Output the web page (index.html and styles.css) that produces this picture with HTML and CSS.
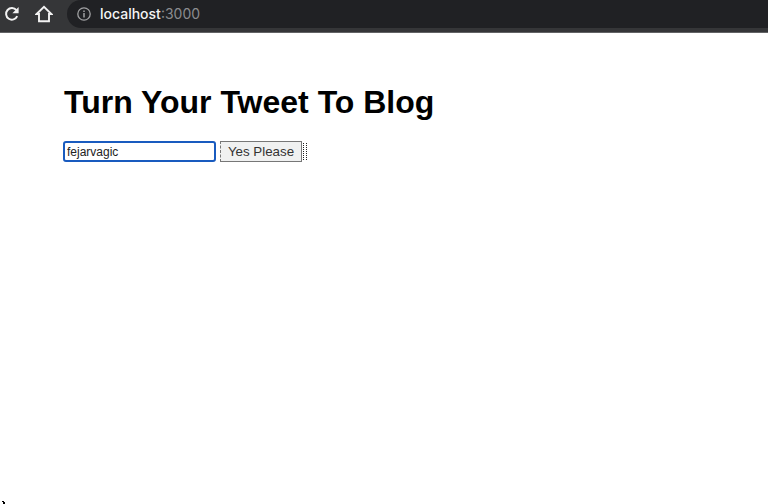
FILE: index.html
```
<!DOCTYPE html>
<html lang="en">
<head>
<meta charset="utf-8">
<title>Turn Your Tweet To Blog</title>
<link rel="stylesheet" href="styles.css">
</head>
<body>
<header class="toolbar">
  <svg class="icon reload" viewBox="0 0 16 16"><path d="M13.2 10.2A5.8 5.8 0 1 1 12.4 4.2" fill="none" stroke="#f2f2f2" stroke-width="2"/><path d="M14.6 1v6.2H8.4z" fill="#f2f2f2"/></svg>
  <svg class="icon home" viewBox="0 0 18 18"><path d="M1.6 9 9 1.8 16.4 9H14v7.2H4V9z" fill="none" stroke="#f2f2f2" stroke-width="1.9"/></svg>
  <div class="address">
    <svg class="info" viewBox="0 0 14 14"><circle cx="7" cy="7" r="6.2" fill="none" stroke="#a0a1a3" stroke-width="1.3"/><path d="M7 6v4.5M7 3.4v1.5" stroke="#a0a1a3" stroke-width="1.5"/></svg>
    <span class="url">localhost<span class="port">:3000</span></span>
  </div>
</header>
<main class="page">
  <h1 class="title">Turn Your Tweet To Blog</h1>
  <form class="form">
    <input class="field" type="text" value="fejarvagic" aria-label="Tweet">
    <button class="submit" type="button">Yes Please</button>
    <span class="edge"></span>
  </form>
</main>
<svg class="corner" viewBox="0 0 6 3"><path d="M2 0h2v1h1v2H3V1H2z" fill="#000"/></svg>
</body>
</html>
```
FILE: styles.css
```
* { box-sizing: border-box; }
body {
  position: relative;
  margin: 0;
  height: 504px;
  overflow: hidden;
  background: #fff;
  color: #000;
  font-family: "Liberation Sans", Arial, sans-serif;
}
.toolbar {
  display: flex;
  height: 33px;
  padding-left: 4px;
  background: #353638;
  border-bottom: 1px solid #626365;
}
.icon { flex: none; }
.reload { width: 16px; height: 16px; margin-top: 6px; }
.home { width: 18px; height: 18px; margin: 5px 0 0 15px; }
.address {
  display: flex;
  flex: 1;
  height: 28px;
  margin-left: 14px;
  padding-left: 10px;
  background: #202124;
  border-radius: 14px 0 0 14px;
}
.info { flex: none; width: 14px; height: 14px; margin-top: 7px; }
.url {
  margin-left: 9px;
  font: 500 14px/28px Inter, sans-serif;
  color: #f4f4f4;
}
.port { color: #8b8c8f; font-weight: 400; }
.page { padding: 51px 64px 0; }
.title {
  margin: 0;
  font-size: 32px;
  line-height: 37px;
  font-weight: 700;
  white-space: nowrap;
}
.form { display: flex; align-items: center; margin-top: 20px; height: 21px; }
.field {
  width: 153px;
  height: 21px;
  margin-left: -1px;
  padding: 0 2px;
  border: 2px solid #195bbf;
  border-radius: 3px;
  outline: none;
  background: #fff;
  font: 12px "Liberation Sans", Arial, sans-serif;
  color: #222;
}
.submit {
  width: 82px;
  height: 21px;
  margin-left: 4px;
  padding: 0;
  border: 1px solid #777;
  border-left-style: dashed;
  border-radius: 0;
  background: #f0f1f1;
  font: 13.33px "Liberation Sans", Arial, sans-serif;
  color: #333;
}
.edge {
  width: 4px;
  height: 17px;
  margin-left: 1px;
  border: dotted #222;
  border-width: 0 1px;
}
.corner { position: absolute; left: 0; bottom: 0; width: 6px; height: 3px; }
```
